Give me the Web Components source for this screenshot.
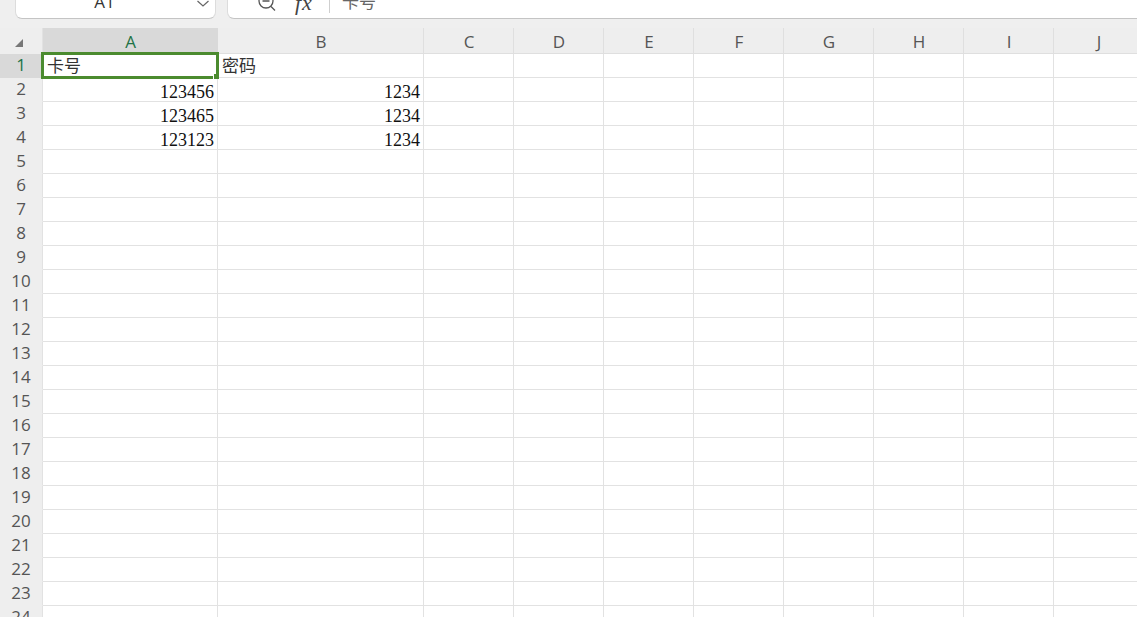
<!DOCTYPE html>
<html lang="zh">
<head>
<meta charset="utf-8">
<title>Sheet</title>
<style>
  html, body { margin: 0; padding: 0; height: 100%; overflow: hidden; background: #fff; }
</style>
</head>
<body>
<sheet-app>
  <formula-bar cell="A1">卡号</formula-bar>
  <sheet-grid></sheet-grid>
</sheet-app>

<script>
// Outer page shell
class SheetApp extends HTMLElement {
  constructor() {
    super();
    const shadow = this.attachShadow({ mode: 'open' });
    shadow.innerHTML = `
      <style>
        :host { display: flex; flex-direction: column; width: 1137px; height: 617px; overflow: hidden; }
      </style>
      <slot></slot>
    `;
  }
}

// Name box and formula input, cut off by the top of the window
class FormulaBar extends HTMLElement {
  constructor() {
    super();
    const shadow = this.attachShadow({ mode: 'open' });
    shadow.innerHTML = `
      <style>
        :host {
          display: flex; flex: none; height: 28px; box-sizing: border-box;
          padding-left: 15px; gap: 11px; background: #efefef; overflow: hidden;
          color: #333;
        }
        .box {
          background: #fff; height: 19px; box-sizing: border-box;
          border-bottom: 1px solid #c4c4c4; display: flex; align-items: flex-end;
        }
        .name {
          flex: none; width: 201px; border-radius: 0 0 7px 7px;
          border-left: 1px solid #dcdcdc; border-right: 1px solid #dcdcdc;
          position: relative; justify-content: center;
        }
        .name span {
          font: 17px "Open Sans", sans-serif; line-height: 22px; height: 22px;
          margin-bottom: 5px; margin-right: 22px; flex: none;
        }
        .name svg { position: absolute; left: 180px; top: 0; }
        .input {
          flex: 1; border-radius: 0 0 0 7px; border-left: 1px solid #dcdcdc;
          position: relative; padding-left: 29px;
        }
        .input svg { flex: none; margin-bottom: 5px; }
        .fx {
          font: italic 22px "Liberation Serif", serif; line-height: 22px; height: 22px;
          margin-left: 18px; margin-bottom: 4px; width: 20px; letter-spacing: 1px; color: #444;
        }
        .divider { width: 1px; height: 13px; background: #cfcfcf; margin: 0 12px 5px 14px; flex: none; align-self: flex-end; }
        .value {
          font: 17px "Noto Sans CJK SC", sans-serif; line-height: 22px; height: 22px;
          margin-bottom: 6px; color: #666;
        }
      </style>
      <div class="box name">
        <span id="cell"></span>
        <svg width="14" height="8" viewBox="0 0 14 8"><path d="M1.5 1l5.5 5 5.5-5" fill="none" stroke="#666" stroke-width="1.2"/></svg>
      </div>
      <div class="box input">
        <svg width="20" height="14" viewBox="0 0 20 14"><g fill="none" stroke="#555" stroke-width="1.3"><circle cx="9" cy="2" r="7"/><path d="M14 7.5l4 4M5.5 2h7"/></g></svg>
        <span class="fx">fx</span>
        <span class="divider"></span>
        <span class="value"><slot></slot></span>
      </div>
    `;
    shadow.getElementById('cell').textContent = this.getAttribute('cell');
  }
}

// One box of the grid; the text comes through the slot
class GridCell extends HTMLElement {
  constructor() {
    super();
    const shadow = this.attachShadow({ mode: 'open' });
    shadow.innerHTML = `
      <style>
        :host {
          display: flex; align-items: center; box-sizing: border-box; min-width: 0;
          border-right: 1px solid #e2e2e2; border-bottom: 1px solid #e2e2e2;
          padding: 0 3px 0 4px; overflow: hidden; white-space: nowrap;
          font: 18px/18px "Liberation Serif", serif; color: #111;
        }
        :host([num]) { justify-content: flex-end; padding-top: 4px; }
        :host([cjk]) { font: 17px/18px "Noto Sans CJK SC", sans-serif; color: #333; padding-bottom: 2px; }
        :host([head]) {
          background: #eeeeee; color: #555; justify-content: center; padding: 2px 0 0 1px;
          font: 17px/20px "Open Sans", sans-serif; border-color: #dfdfdf;
        }
        :host([side]) { border-bottom-color: #eeeeee; border-right-color: #e2e2e2; padding: 0 0 1px 0; }
        :host([on]) { background: #d9d9d9; color: #217346; border-color: #d9d9d9; }
      </style>
      <slot></slot>
    `;
  }
}

// Headers, rows and the selected cell
class SheetGrid extends HTMLElement {
  constructor() {
    super();
    const shadow = this.attachShadow({ mode: 'open' });
    const cols = ['A', 'B', 'C', 'D', 'E', 'F', 'G', 'H', 'I', 'J'];
    const data = {
      '1,A': ['卡号', 'cjk'], '1,B': ['密码', 'cjk'],
      '2,A': ['123456', 'num'], '2,B': ['1234', 'num'],
      '3,A': ['123465', 'num'], '3,B': ['1234', 'num'],
      '4,A': ['123123', 'num'], '4,B': ['1234', 'num']
    };

    let cells = `<grid-cell head side class="corner">
      <svg width="10" height="10" viewBox="0 0 10 10" style="margin:6px 4px 0 0"><path d="M9 1v8H1z" fill="#777"/></svg></grid-cell>`;
    cols.forEach(c => {
      cells += `<grid-cell head ${c === 'A' ? 'on' : ''}>${c}</grid-cell>`;
    });
    for (let r = 1; r <= 24; r++) {
      cells += `<grid-cell head side ${r === 1 ? 'on' : ''}>${r}</grid-cell>`;
      cols.forEach(c => {
        const d = data[r + ',' + c];
        cells += d ? `<grid-cell ${d[1]}>${d[0]}</grid-cell>` : `<grid-cell></grid-cell>`;
      });
    }

    shadow.innerHTML = `
      <style>
        :host {
          display: grid; position: relative; flex: none;
          grid-template-columns: 43px 175px 206px repeat(8, 90px);
          grid-template-rows: 26px repeat(24, 24px);
          background: #fff;
        }
        .selection {
          position: absolute; left: 41px; top: 24px; width: 178px; height: 27px;
          box-sizing: border-box; border: 3px solid #4b8b2f; pointer-events: none;
        }
        .handle {
          position: absolute; right: -3px; bottom: -3px; width: 5px; height: 5px;
          background: #4b8b2f; border-left: 1px solid #fff;
        }
      </style>
      ${cells}
      <div class="selection"><div class="handle"></div></div>
    `;
  }
}

customElements.define('grid-cell', GridCell);
customElements.define('sheet-app', SheetApp);
customElements.define('formula-bar', FormulaBar);
customElements.define('sheet-grid', SheetGrid);
</script>
</body>
</html>
